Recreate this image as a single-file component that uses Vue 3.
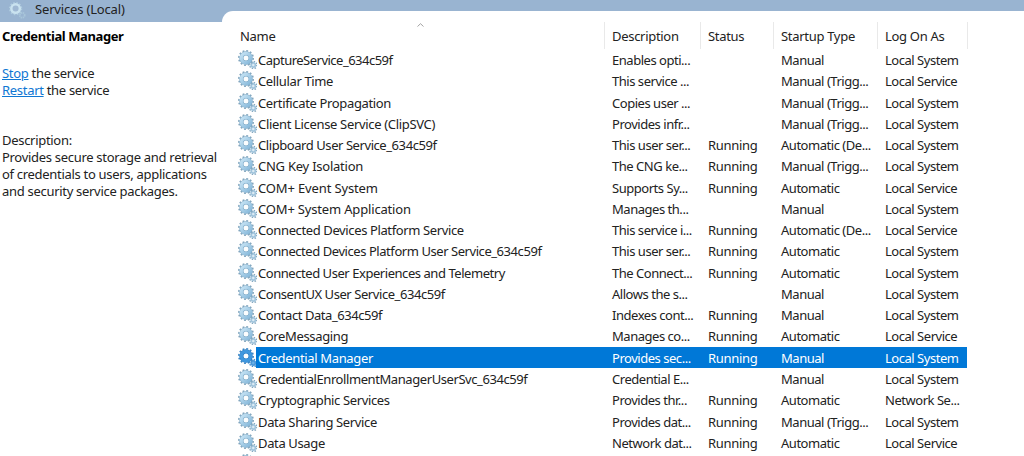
<template>
  <div class="console">
    <svg class="symbols" width="0" height="0">
      <defs>
        <linearGradient id="gear-fill" x1="0" y1="0" x2="1" y2="1">
          <stop offset="0" stop-color="#c6e3f4" />
          <stop offset="1" stop-color="#86b8da" />
        </linearGradient>
        <symbol id="gear" viewBox="0 0 19 19">
          <circle cx="15.3" cy="15" r="3.6" fill="none" stroke="#86a9c0" stroke-width="1.5" stroke-dasharray="1.41 1.41" />
          <circle cx="15.3" cy="15" r="2.1" fill="#dcebf4" stroke="#a0c4dc" stroke-width="1.7" />
          <circle cx="8" cy="8" r="7.2" fill="none" stroke="#86a8bf" stroke-width="1.6" stroke-dasharray="1.89 1.88" />
          <circle cx="8" cy="8" r="4.6" fill="#fbfdfe" stroke="#7ba8c6" stroke-width="4.2" />
          <circle cx="8" cy="8" r="4.7" fill="none" stroke="url(#gear-fill)" stroke-width="3.2" />
        </symbol>
        <symbol id="gear-selected" viewBox="0 0 19 19">
          <circle cx="15.3" cy="15" r="3.6" fill="none" stroke="#438cca" stroke-width="1.5" stroke-dasharray="1.41 1.41" />
          <circle cx="15.3" cy="15" r="2.1" fill="#69b0e8" stroke="#4a97d8" stroke-width="1.7" />
          <circle cx="8" cy="8" r="7.2" fill="none" stroke="#3f88c6" stroke-width="1.6" stroke-dasharray="1.89 1.88" />
          <circle cx="8" cy="8" r="4.6" fill="#fbfdfe" stroke="#2479c2" stroke-width="4.2" />
          <circle cx="8" cy="8" r="4.7" fill="none" stroke="#3f97de" stroke-width="3.2" />
        </symbol>
        <symbol id="gear-title" viewBox="0 0 19 19">
          <circle cx="15" cy="15" r="2.6" fill="none" stroke="#a9c6da" stroke-width="1.9" stroke-dasharray="1.4 .7" />
          <circle cx="8" cy="8" r="6.3" fill="none" stroke="#b0cde0" stroke-width="1.5" stroke-dasharray="1.65 1.65" />
          <circle cx="8" cy="8" r="4.5" fill="#9fb8d3" stroke="#c9e2ef" stroke-width="2.6" />
        </symbol>
      </defs>
    </svg>

    <aside class="info">
      <div class="info-title">
        <svg class="title-icon"><use href="#gear-title" /></svg>
        <span>Services (Local)</span>
      </div>
      <div class="info-body">
        <h2 class="service-name">Credential Manager</h2>
        <p class="actions">
          <a class="link">Stop</a> the service<br />
          <a class="link">Restart</a> the service
        </p>
        <p class="description">
          Description:<br />
          Provides secure storage and retrieval<br />
          of credentials to users, applications<br />
          and security service packages.
        </p>
      </div>
    </aside>

    <main class="list">
      <div class="list-header">
        <div class="head head-name">
          Name
          <svg class="sort" viewBox="0 0 7 4"><path d="M.5 3.5 3.5.7l3 2.8" fill="none" stroke="#999" stroke-width=".9" /></svg>
        </div>
        <div v-for="title in columns" :key="title" class="head">{{ title }}</div>
      </div>
      <div
        v-for="(row, index) in services"
        :key="index"
        class="row"
        :class="{ selected: index === selectedIndex }"
      >
        <svg class="row-icon"><use :href="index === selectedIndex ? '#gear-selected' : '#gear'" /></svg>
        <div class="cell name" :style="{ letterSpacing: row.tracking + 'px' }">{{ row.name }}</div>
        <div v-for="(text, col) in row.cells" :key="col" class="cell">{{ text }}</div>
      </div>
    </main>
  </div>
</template>

<script setup>
import { ref } from 'vue'

const columns = ['Description', 'Status', 'Startup Type', 'Log On As']

const selectedIndex = ref(14)

// tracking is the letter spacing of the name, in pixels
const services = [
  { name: 'CaptureService_634c59f', tracking: -0.51, cells: ['Enables opti...', '', 'Manual', 'Local System'] },
  { name: 'Cellular Time', tracking: -0.36, cells: ['This service ...', '', 'Manual (Trigg...', 'Local Service'] },
  { name: 'Certificate Propagation', tracking: -0.35, cells: ['Copies user ...', '', 'Manual (Trigg...', 'Local System'] },
  { name: 'Client License Service (ClipSVC)', tracking: -0.33, cells: ['Provides infr...', '', 'Manual (Trigg...', 'Local System'] },
  { name: 'Clipboard User Service_634c59f', tracking: -0.43, cells: ['This user ser...', 'Running', 'Automatic (De...', 'Local System'] },
  { name: 'CNG Key Isolation', tracking: -0.24, cells: ['The CNG ke...', 'Running', 'Manual (Trigg...', 'Local System'] },
  { name: 'COM+ Event System', tracking: -0.14, cells: ['Supports Sy...', 'Running', 'Automatic', 'Local Service'] },
  { name: 'COM+ System Application', tracking: -0.17, cells: ['Manages th...', '', 'Manual', 'Local System'] },
  { name: 'Connected Devices Platform Service', tracking: -0.38, cells: ['This service i...', 'Running', 'Automatic (De...', 'Local Service'] },
  { name: 'Connected Devices Platform User Service_634c59f', tracking: -0.44, cells: ['This user ser...', 'Running', 'Automatic', 'Local System'] },
  { name: 'Connected User Experiences and Telemetry', tracking: -0.45, cells: ['The Connect...', 'Running', 'Automatic', 'Local System'] },
  { name: 'ConsentUX User Service_634c59f', tracking: -0.43, cells: ['Allows the s...', '', 'Manual', 'Local System'] },
  { name: 'Contact Data_634c59f', tracking: -0.44, cells: ['Indexes cont...', 'Running', 'Manual', 'Local System'] },
  { name: 'CoreMessaging', tracking: -0.36, cells: ['Manages co...', 'Running', 'Automatic', 'Local Service'] },
  { name: 'Credential Manager', tracking: -0.35, cells: ['Provides sec...', 'Running', 'Manual', 'Local System'] },
  { name: 'CredentialEnrollmentManagerUserSvc_634c59f', tracking: -0.42, cells: ['Credential E...', '', 'Manual', 'Local System'] },
  { name: 'Cryptographic Services', tracking: -0.37, cells: ['Provides thr...', 'Running', 'Automatic', 'Network Se...'] },
  { name: 'Data Sharing Service', tracking: -0.36, cells: ['Provides dat...', 'Running', 'Manual (Trigg...', 'Local System'] },
  { name: 'Data Usage', tracking: -0.36, cells: ['Network dat...', 'Running', 'Automatic', 'Local Service'] },
  { name: '', tracking: 0, cells: ['', '', '', ''] }
]
</script>

<style>
body {
  background: #fff;
  overflow: hidden;
}
</style>

<style scoped>
.console {
  display: flex;
  width: 1024px;
  height: 456px;
  overflow: hidden;
  background: linear-gradient(#99b4d1 22px, #fff 22px);
  font-family: "Noto Sans", "Open Sans", sans-serif;
  font-size: 13px;
  letter-spacing: -0.3px;
  color: #222;
}

.symbols {
  position: absolute;
}

.info {
  width: 222px;
  flex-shrink: 0;
}

.info-title {
  display: flex;
  align-items: center;
  height: 22px;
  padding-left: 8px;
  gap: 9px;
  line-height: 18px;
  letter-spacing: -0.17px;
}

.info-title span {
  margin-top: -5px;
}

.title-icon {
  width: 18px;
  height: 18px;
  margin-top: -3px;
}

.info-body {
  padding: 6px 0 0 2px;
  line-height: 16.8px;
  white-space: nowrap;
}

.service-name {
  margin: 0;
  font-size: 13px;
  font-weight: 700;
  line-height: 17px;
  letter-spacing: -0.4px;
  color: #000;
}

.actions {
  margin: 20px 0 0;
}

.link {
  color: #0f77d3;
  text-decoration: underline;
}

.description {
  margin: 33.6px 0 0;
}

.list {
  flex: 1;
  min-width: 0;
  height: 445px;
  margin-top: 11px;
  background: #fff;
  border-top-left-radius: 11px;
}

.list-header {
  display: grid;
  grid-template-columns: 383px 96px 73px 104px 90px;
  height: 27px;
  padding-top: 11px;
}

.head {
  box-sizing: border-box;
  height: 27px;
  padding-left: 7px;
  border-right: 1px solid #e9e9e9;
  line-height: 28px;
  white-space: nowrap;
}

.head-name {
  display: flex;
  padding-left: 18px;
}

.sort {
  width: 7px;
  height: 4px;
  margin: 1px 0 0 142px;
}

.row {
  display: grid;
  grid-template-columns: 18px 351px 96px 73px 104px 87px;
  grid-template-rows: 21.28px;
  width: 745px;
  height: 21.28px;
  padding-left: 16px;
  box-sizing: border-box;
  line-height: 22.6px;
  white-space: nowrap;
}

.row-icon {
  width: 19px;
  height: 19px;
  margin-top: 1px;
}

.cell {
  padding-left: 5px;
  letter-spacing: -0.47px;
}

.cell.name {
  padding-left: 2px;
}

.cell:nth-child(4) {
  letter-spacing: -0.3px;
}

.selected .cell {
  background: #0078d7;
  color: #fff;
}
</style>
